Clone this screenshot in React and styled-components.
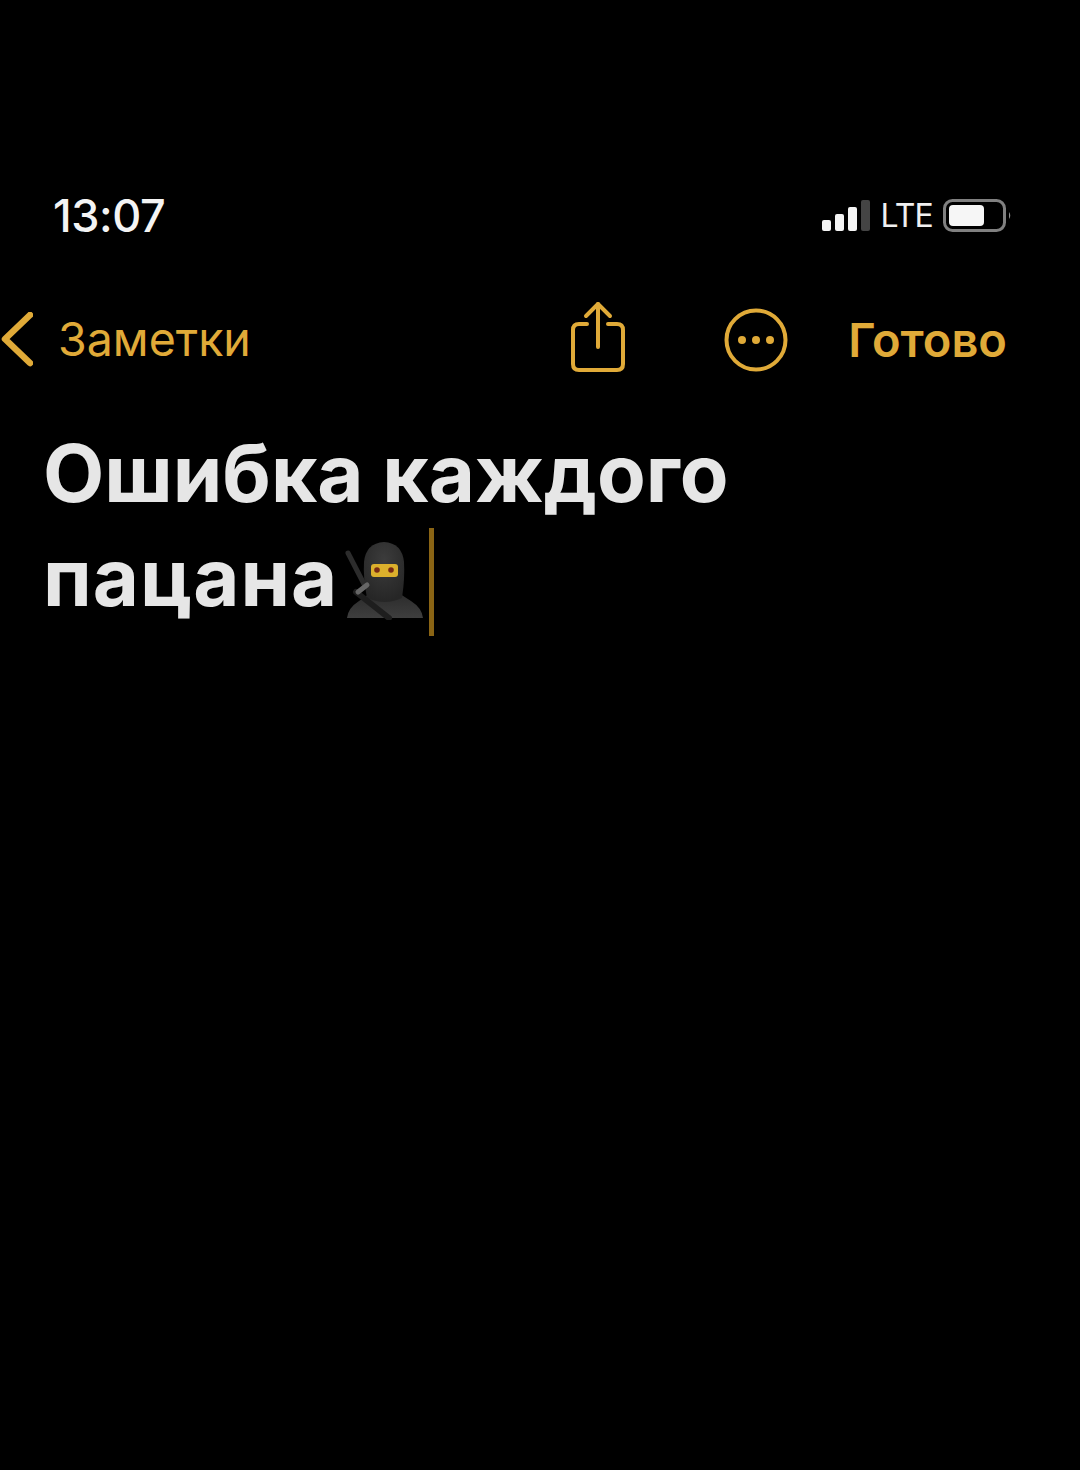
import React from 'react';
import styled, { createGlobalStyle } from 'styled-components';

const GOLD = '#e0aa38';

const GlobalStyle = createGlobalStyle`
  html, body {
    margin: 0;
    padding: 0;
    background: #000;
  }
`;

const Screen = styled.div`
  width: 1080px;
  height: 1470px;
  background: #000;
  overflow: hidden;
  font-family: Inter, "Liberation Sans", sans-serif;
`;

const StatusBar = styled.div`
  display: flex;
  align-items: center;
  justify-content: space-between;
  height: 50px;
  padding: 190px 68px 0 53px;
`;

const Time = styled.div`
  color: #f4f4f4;
  font-size: 45px;
  font-weight: 500;
  letter-spacing: -0.4px;
`;

const StatusIcons = styled.div`
  display: flex;
  align-items: center;
  gap: 10px;
`;

const Signal = styled.div`
  display: flex;
  align-items: flex-end;
  gap: 4px;
  height: 32px;
`;

const SignalBar = styled.div`
  width: 9px;
  height: ${(p) => p.$h}px;
  border-radius: 2px;
  background: ${(p) => (p.$off ? '#444' : '#f4f4f4')};
`;

const Lte = styled.div`
  color: #f0f0f0;
  font-size: 32px;
  font-weight: 400;
  letter-spacing: -0.8px;
`;

const NavBar = styled.div`
  display: flex;
  align-items: center;
  height: 100px;
  margin-top: 50px;
  padding: 0 73px 0 1px;
`;

const BackLink = styled.div`
  display: flex;
  align-items: center;
  gap: 25px;
  margin-right: auto;
  color: ${GOLD};
  font-size: 46.5px;
  font-weight: 400;
`;

const BackLabel = styled.span`
  margin-top: -2px;
`;

const ShareIcon = styled.svg`
  display: block;
  width: 56px;
  height: 74px;
  margin: -4px 98px 0 0;
`;

const MoreIcon = styled.svg`
  display: block;
  width: 64px;
  height: 64px;
  margin: -1px 60px 0 0;
`;

const Done = styled.div`
  margin-top: -2px;
  color: ${GOLD};
  font-size: 47px;
  font-weight: 600;
`;

const Title = styled.h1`
  margin: 31px 0 0;
  padding-left: 43px;
  color: #e6e6e6;
  font-size: 79.6px;
  font-weight: 700;
`;

const TitleLine = styled.div`
  display: flex;
  align-items: center;
  height: 104px;
  letter-spacing: ${(p) => (p.$wide ? '1px' : '0')};
`;

const Ninja = styled.svg`
  display: block;
  flex-shrink: 0;
  width: 80px;
  height: 80px;
  margin: 6px 0 0 7px;
`;

const Caret = styled.div`
  flex-shrink: 0;
  width: 5px;
  height: 108px;
  margin: 10px 0 0 4px;
  background: #8a6414;
`;

const App = () => (
  <Screen>
    <GlobalStyle />
    <StatusBar>
      <Time>13:07</Time>
      <StatusIcons>
        <Signal>
          <SignalBar $h={11} />
          <SignalBar $h={17} />
          <SignalBar $h={24} />
          <SignalBar $h={31} $off />
        </Signal>
        <Lte>LTE</Lte>
        <svg width="69" height="33" viewBox="0 0 69 33">
          <rect x="1.500" y="1.500" width="60" height="30" rx="8" fill="none" stroke="#808080" strokeWidth="3" />
          <rect x="6" y="6" width="35" height="21" rx="4" fill="#f6f6f6" />
          <path d="M66 13 Q68.500 16.500 66 20 Z" fill="#8c8c8c" />
        </svg>
      </StatusIcons>
    </StatusBar>
    <NavBar>
      <BackLink>
        <svg width="32" height="56" viewBox="0 0 32 56">
          <path d="M29 3 L4 27 L29 51" fill="none" stroke={GOLD} strokeWidth="6.500" strokeLinecap="round" strokeLinejoin="round" />
        </svg>
        <BackLabel>Заметки</BackLabel>
      </BackLink>
      <ShareIcon viewBox="0 0 56 74" fill="none" stroke={GOLD} strokeWidth="4" strokeLinecap="round" strokeLinejoin="round">
        <path d="M17 23 H9 Q3 23 3 29 V63 Q3 69 9 69 H47 Q53 69 53 63 V29 Q53 23 47 23 H38" />
        <path d="M28 46 V3" />
        <path d="M16 15 L28 3 L40 15" />
      </ShareIcon>
      <MoreIcon viewBox="0 0 64 64">
        <circle cx="32" cy="32" r="29.500" fill="none" stroke={GOLD} strokeWidth="4" />
        <circle cx="18" cy="32" r="4" fill={GOLD} />
        <circle cx="32" cy="32" r="4" fill={GOLD} />
        <circle cx="46" cy="32" r="4" fill={GOLD} />
      </MoreIcon>
      <Done>Готово</Done>
    </NavBar>
    <Title>
      <TitleLine>Ошибка каждого</TitleLine>
      <TitleLine $wide>
        пацана
        <Ninja viewBox="0 0 80 80">
          <defs>
            <radialGradient id="hood" cx="50%" cy="30%" r="70%">
              <stop offset="0%" stopColor="#3c3c3c" />
              <stop offset="100%" stopColor="#262626" />
            </radialGradient>
            <linearGradient id="cloak" x1="0" y1="0" x2="0" y2="1">
              <stop offset="0%" stopColor="#2a2a2a" />
              <stop offset="100%" stopColor="#3e3e3e" />
            </linearGradient>
          </defs>
          <path d="M3 13 L20 46" stroke="#2c2c2c" strokeWidth="5" strokeLinecap="round" />
          <path d="M2 78 Q3 68 14 61 L27 52 L52 52 L66 61 Q77 68 78 78 Z" fill="url(#cloak)" />
          <path d="M22 58 Q18 38 19 22 Q21 3 39 2 Q57 3 59 22 Q60 38 57 58 Q40 66 22 58 Z" fill="url(#hood)" />
          <rect x="26" y="24" width="27" height="13" rx="3" fill="#dcb02c" />
          <circle cx="32" cy="30" r="2.800" fill="#7a2a14" />
          <circle cx="46" cy="30" r="2.800" fill="#7a2a14" />
          <path d="M11 52 L44 78" stroke="#1e1e1e" strokeWidth="6" strokeLinecap="round" />
          <path d="M13 52 L22 45" stroke="#666" strokeWidth="5" strokeLinecap="round" />
        </Ninja>
        <Caret />
      </TitleLine>
    </Title>
  </Screen>
);

export default App;
